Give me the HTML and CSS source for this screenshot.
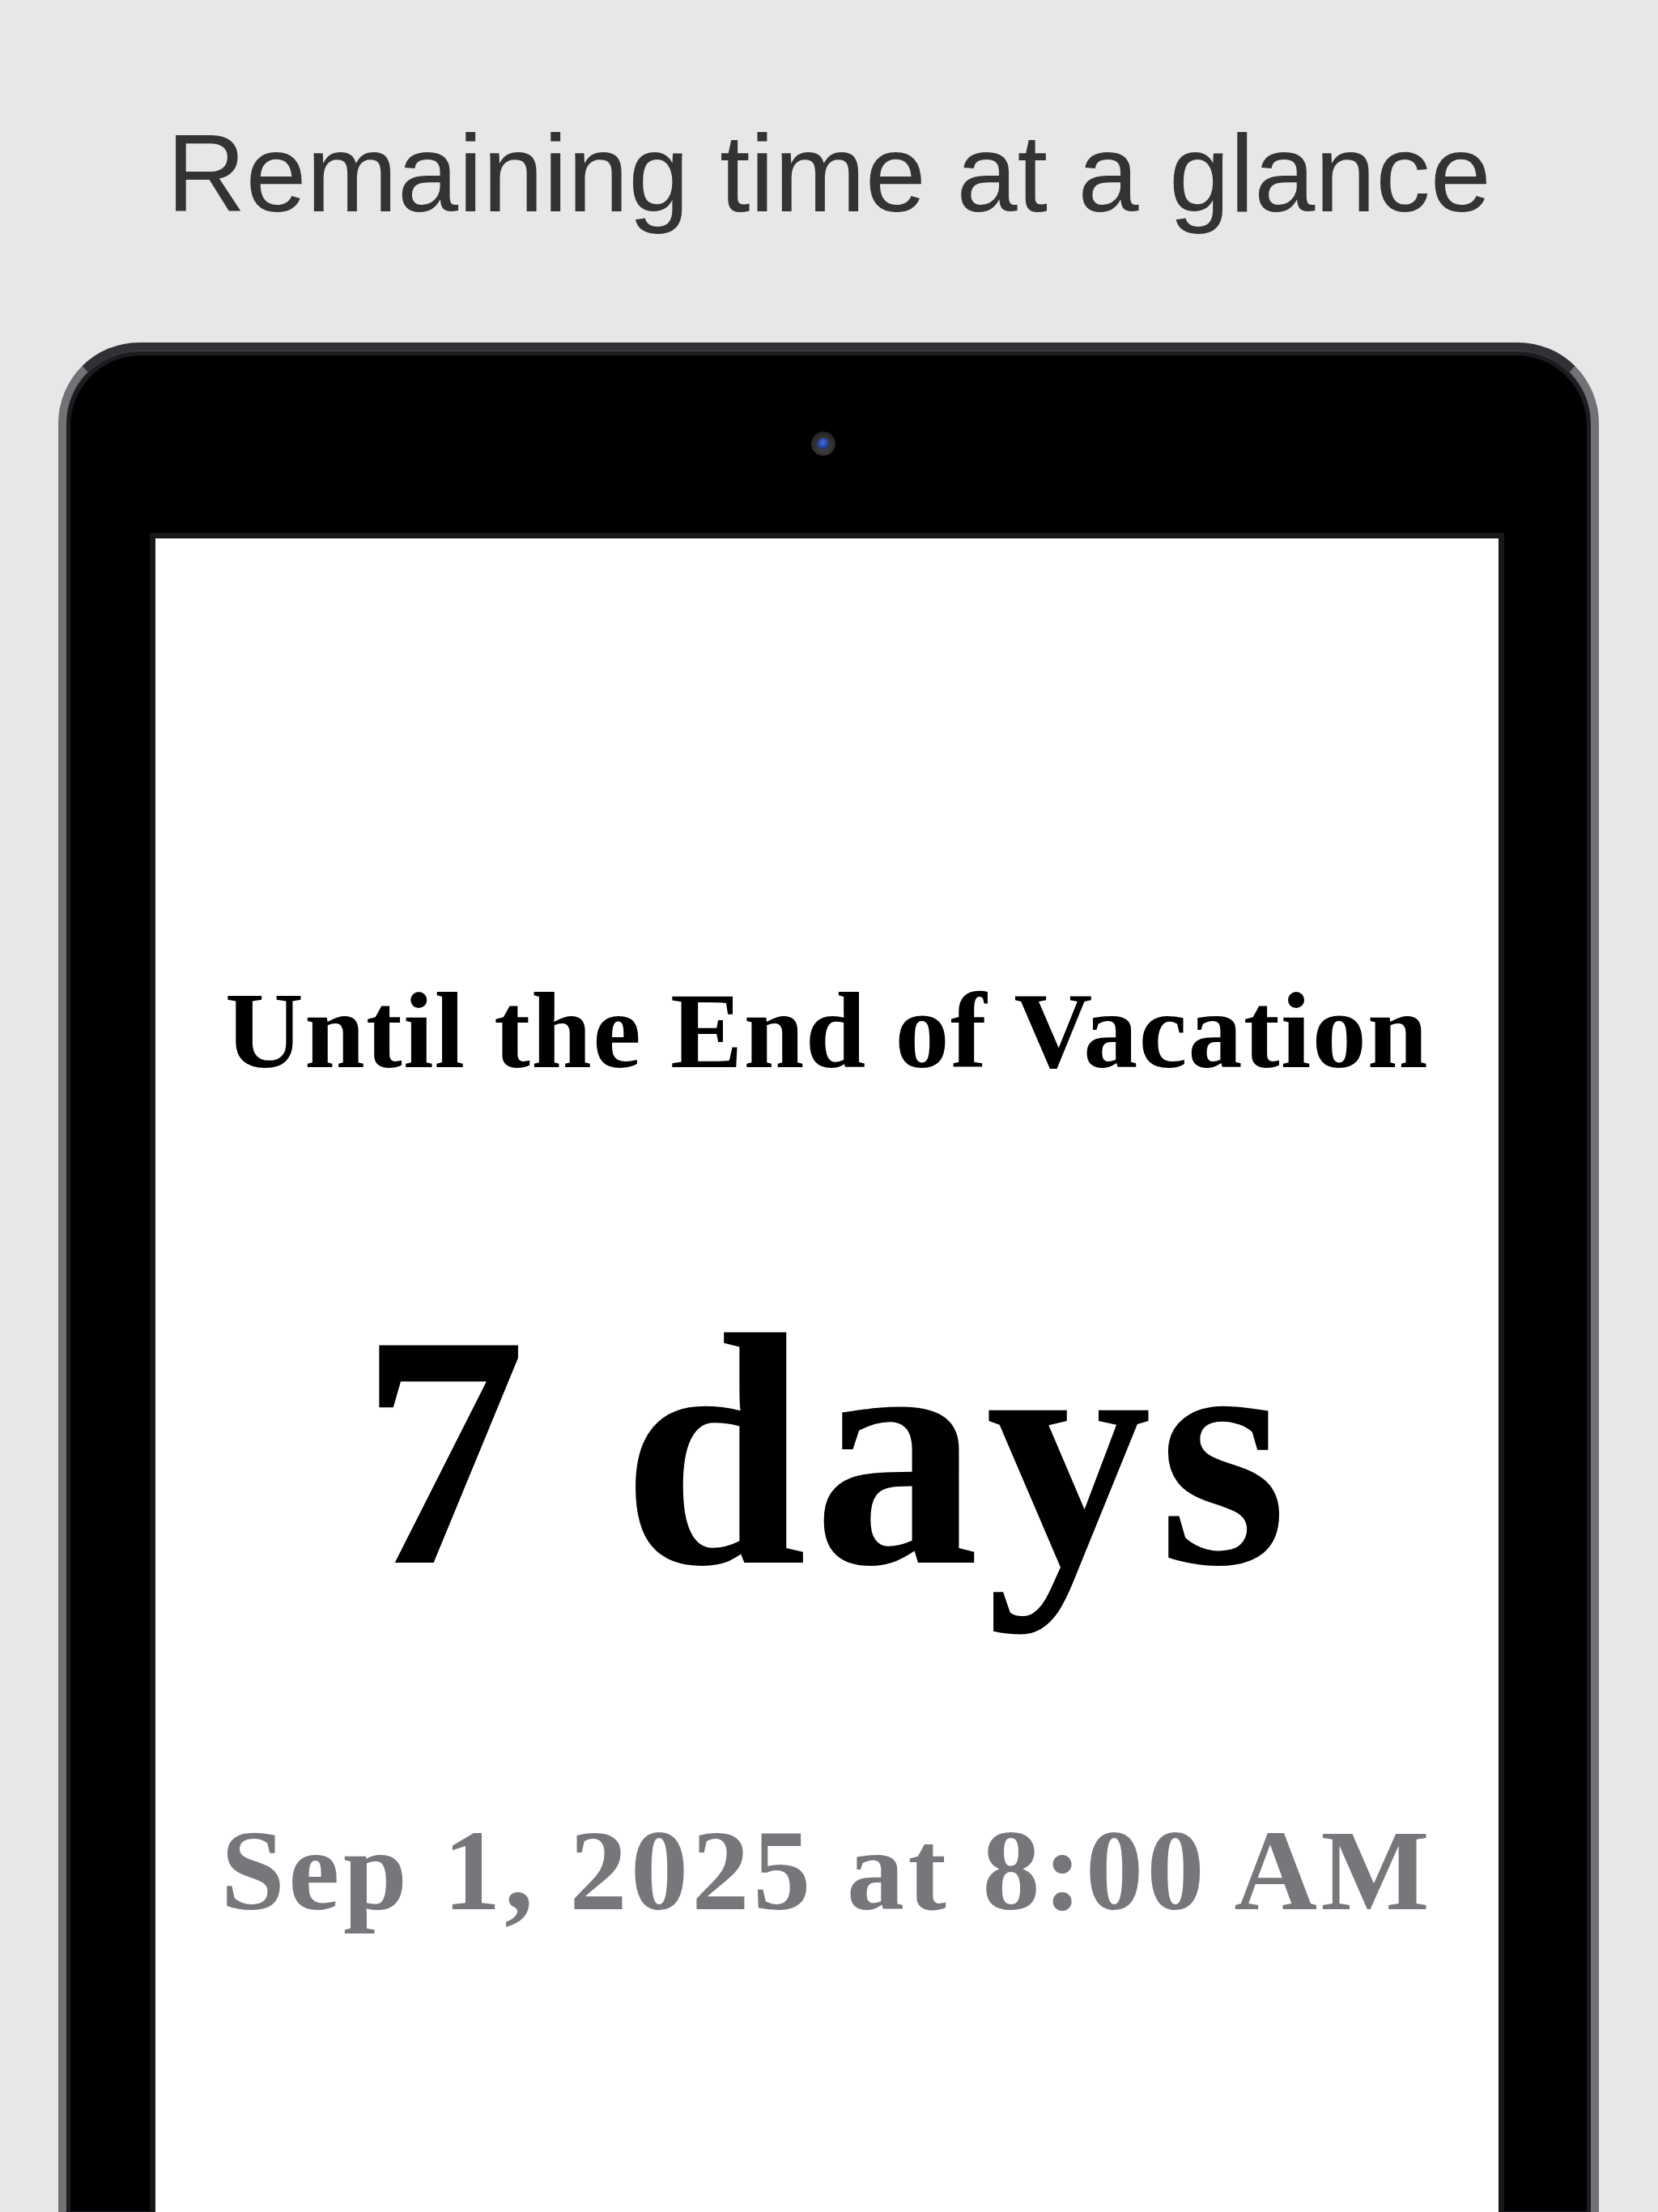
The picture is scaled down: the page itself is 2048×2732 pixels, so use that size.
FILE: index.html
```html
<!DOCTYPE html>
<html lang="en">
<head>
<meta charset="utf-8">
<title>Remaining time at a glance</title>
<link rel="stylesheet" href="styles.css">
</head>
<body>
  <header class="caption">Remaining time at a glance</header>
  <div class="device">
    <div class="bezel">
      <div class="camera"><div class="lens"></div></div>
      <main class="screen">
        <div class="event-title">Until the End of Vacation</div>
        <div class="countdown">7 days</div>
        <div class="event-date">Sep 1, 2025 at 8:00 AM</div>
      </main>
    </div>
  </div>
</body>
</html>
```

FILE: styles.css
```css
html, body {
  margin: 0;
  padding: 0;
  height: 2732px;
  overflow: hidden;
}
body {
  background: #e7e7e7;
  width: 2048px;
}
.caption {
  padding-top: 147px;
  height: 135px;
  font-family: "Liberation Sans", Arial, sans-serif;
  font-size: 135px;
  line-height: 135px;
  color: #333333;
  text-align: center;
  white-space: nowrap;
}
.device {
  margin-top: 141px;
  margin-left: 72px;
  width: 1903px;
  height: 2309px;
  box-sizing: border-box;
  border: 10px solid #717176;
  border-top-color: #2f3135;
  border-bottom: none;
  border-radius: 100px 100px 0 0;
  padding: 5px 4px 0;
  background: #1c1d20;
  box-shadow: inset 0 1px 0 #4a4c50;
}
.bezel {
  height: 100%;
  box-sizing: border-box;
  background: #000;
  border-radius: 88px 88px 0 0;
  padding: 95px 103px 0 99px;
  display: flex;
  flex-direction: column;
  box-shadow: inset 0 0 0 1px #202125;
}
.camera {
  align-self: center;
  margin-left: -10px;
  width: 30px;
  height: 30px;
  border-radius: 50%;
  background: radial-gradient(circle at 50% 60%, #4a4a4a 0%, #2a2a2a 60%, #111 100%);
  display: flex;
  align-items: center;
  justify-content: center;
  margin-bottom: 95px;
}
.lens {
  width: 14px;
  height: 14px;
  border-radius: 50%;
  background: radial-gradient(circle at 45% 40%, #4a6fd8 0%, #2444a8 50%, #101c50 100%);
}
.screen {
  flex: 1;
  background: #fff;
  border: 7px solid #181818;
  border-bottom: none;
  display: flex;
  flex-direction: column;
  align-items: center;
  padding-top: 541px;
  font-family: "Liberation Serif", "Times New Roman", serif;
  font-weight: bold;
  white-space: nowrap;
}
.event-title {
  font-size: 134px;
  line-height: 134px;
  letter-spacing: 1.4px;
  color: #000;
}
.countdown {
  margin-top: 247px;
  font-size: 410px;
  line-height: 410px;
  letter-spacing: 8px;
  color: #000;
}
.event-date {
  margin-top: 242px;
  font-size: 142px;
  line-height: 142px;
  letter-spacing: 4.6px;
  color: #77767b;
}
```
